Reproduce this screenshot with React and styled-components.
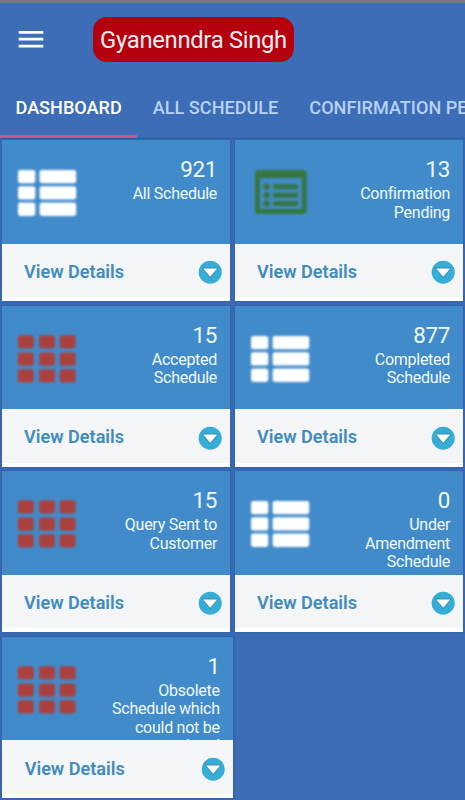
import React from 'react'
import styled, { createGlobalStyle } from 'styled-components'

const GlobalStyle = createGlobalStyle`
  * {
    box-sizing: border-box;
  }

  body {
    margin: 0;
    background: #3c6db6;
    font-family: Roboto, 'Liberation Sans', sans-serif;
    overflow: hidden;
  }
`

const Screen = styled.div`
  width: 465px;
  height: 800px;
  background: #3c6db6;
  overflow: hidden;
`

const StatusStrip = styled.div`
  height: 3px;
  background: #7b7b7d;
`

const Toolbar = styled.header`
  display: flex;
  align-items: flex-start;
  height: 74px;
  padding: 14px 0 0 18px;
`

const MenuButton = styled.button`
  width: 26px;
  height: 44px;
  margin-right: 49px;
  padding: 0;
  border: 0;
  background: none;

  svg {
    display: block;
  }
`

const UserName = styled.div`
  width: 201px;
  height: 45px;
  border-radius: 14px;
  background: #b4000f;
  color: #fdeff0;
  font-size: 23.8px;
  letter-spacing: -0.3px;
  line-height: 47px;
  text-align: center;
  white-space: nowrap;
`

const Tabs = styled.nav`
  display: flex;
  height: 62px;
  border-bottom: 1px solid #3260a8;
`

const Tab = styled.div`
  flex: none;
  height: 61px;
  padding: 0 15.5px;
  border-bottom: 3px solid ${props => (props.$active ? '#cf5296' : 'transparent')};
  color: ${props => (props.$active ? '#ffffff' : '#b7d2f6')};
  font-size: 18.1px;
  font-weight: 500;
  line-height: 62px;
  white-space: nowrap;
`

const Grid = styled.main`
  display: grid;
  grid-template-columns: 228px 228px;
  grid-auto-rows: 161px;
  gap: 4.6px 5px;
  padding: 1px 0 0 2.4px;
`

const CardBox = styled.section`
  display: flex;
  flex-direction: column;
  width: ${props => (props.$wide ? '230.6px' : '228px')};
  height: 161px;
  box-shadow: 0 0 2px 1px rgba(40, 80, 160, 0.45);
`

const CardTop = styled.div`
  display: flex;
  justify-content: space-between;
  height: 103.5px;
  padding: 16px 13.3px 0 14px;
  background: #428bca;
  overflow: hidden;
`

const IconSlot = styled.div`
  flex: none;
  width: 64px;
  padding-top: 11px;

  svg {
    display: block;
    filter: blur(0.9px);
  }
`

const Stats = styled.div`
  width: 112px;
  color: #eef9ff;
  text-align: right;
`

const Count = styled.div`
  font-size: 22.4px;
  letter-spacing: -0.3px;
  line-height: 26px;
`

const Label = styled.div`
  margin-top: 3.3px;
  font-size: 16px;
  letter-spacing: -0.26px;
  line-height: 18.3px;
`

const CardFooter = styled.div`
  display: flex;
  align-items: center;
  justify-content: space-between;
  height: 57.5px;
  padding: 4px 8px 0 ${props => (props.$wide ? '22.3px' : '21.6px')};
  border-bottom: 4px solid #ffffff;
  background: #f3f5f7;
  color: #428bbf;
  font-size: 18.1px;
  font-weight: 600;
  line-height: 20px;

  span {
    padding-bottom: 1px;
  }
`

const MenuIcon = () => (
  <svg width="26" height="44" viewBox="0 0 26 44">
    <path d="M.7 15.3h24.6M.7 22.2h24.6M.7 29.1h24.6" stroke="#fff" strokeWidth="2.7" />
  </svg>
)

const ListIcon = () => (
  <svg width="64" height="52" viewBox="0 0 64 52" fill="#fff">
    {[2.9, 19.2, 35.5].map(y => (
      <g key={y}>
        <rect x="2" y={y} width="17.3" height="13.4" rx="2.4" />
        <rect x="23.6" y={y} width="36.6" height="13.4" rx="2.4" />
      </g>
    ))}
  </svg>
)

const GridIcon = () => (
  <svg width="64" height="52" viewBox="0 0 64 52" fill="#ab413f">
    {[2.2, 19.6, 36.2].map(y =>
      [1.8, 23, 43.6].map(x => (
        <rect key={`${x}-${y}`} x={x} y={y} width="16" height="13.2" rx="2.8" />
      ))
    )}
  </svg>
)

const FormIcon = () => (
  <svg width="64" height="52" viewBox="0 0 64 52" fill="#36763f">
    <path
      fillRule="evenodd"
      d="M10 3h43.6a4 4 0 0 1 4 4v36a4 4 0 0 1-4 4H10a4 4 0 0 1-4-4V7a4 4 0 0 1 4-4Zm.9 8v29.4a1.5 1.5 0 0 0 1.5 1.5h38.8a1.5 1.5 0 0 0 1.5-1.5V11Z"
    />
    {[19.8, 28.2, 36.6].map(y => (
      <g key={y}>
        <circle cx="17.6" cy={y} r="3.3" />
        <rect x="23.8" y={y - 2.5} width="25.4" height="5" rx="1" />
      </g>
    ))}
  </svg>
)

const ArrowIcon = () => (
  <svg width="24" height="24" viewBox="0 0 24 24">
    <circle cx="12.2" cy="12.2" r="11.5" fill="#35add6" />
    <path d="M3.8 7.4h16.8L12.2 18.2Z" fill="#3a7f9f" opacity="0.75" />
    <path d="M5.2 8.6h14L12.2 16.8Z" fill="#fff" />
  </svg>
)

const icons = {
  list: ListIcon,
  grid: GridIcon,
  form: FormIcon,
}

const tabs = ['DASHBOARD', 'ALL SCHEDULE', 'CONFIRMATION PENDING']

const cards = [
  { count: 921, label: 'All Schedule', icon: 'list' },
  { count: 13, label: 'Confirmation Pending', icon: 'form' },
  { count: 15, label: 'Accepted Schedule', icon: 'grid' },
  { count: 877, label: 'Completed Schedule', icon: 'list' },
  { count: 15, label: 'Query Sent to Customer', icon: 'grid' },
  { count: 0, label: 'Under Amendment Schedule', icon: 'list' },
  { count: 1, label: 'Obsolete Schedule which could not be completed', icon: 'grid', wide: true },
]

function Card({ count, label, icon, wide }) {
  const Icon = icons[icon]

  return (
    <CardBox $wide={wide}>
      <CardTop>
        <IconSlot>
          <Icon />
        </IconSlot>
        <Stats>
          <Count>{count}</Count>
          <Label>{label}</Label>
        </Stats>
      </CardTop>
      <CardFooter $wide={wide}>
        <span>View Details</span>
        <ArrowIcon />
      </CardFooter>
    </CardBox>
  )
}

export default function App() {
  return (
    <>
      <GlobalStyle />
      <Screen>
        <StatusStrip />
        <Toolbar>
          <MenuButton aria-label="Menu">
            <MenuIcon />
          </MenuButton>
          <UserName>Gyanenndra Singh</UserName>
        </Toolbar>
        <Tabs>
          {tabs.map((tab, i) => (
            <Tab key={tab} $active={i === 0}>
              {tab}
            </Tab>
          ))}
        </Tabs>
        <Grid>
          {cards.map(card => (
            <Card key={card.label} {...card} />
          ))}
        </Grid>
      </Screen>
    </>
  )
}
